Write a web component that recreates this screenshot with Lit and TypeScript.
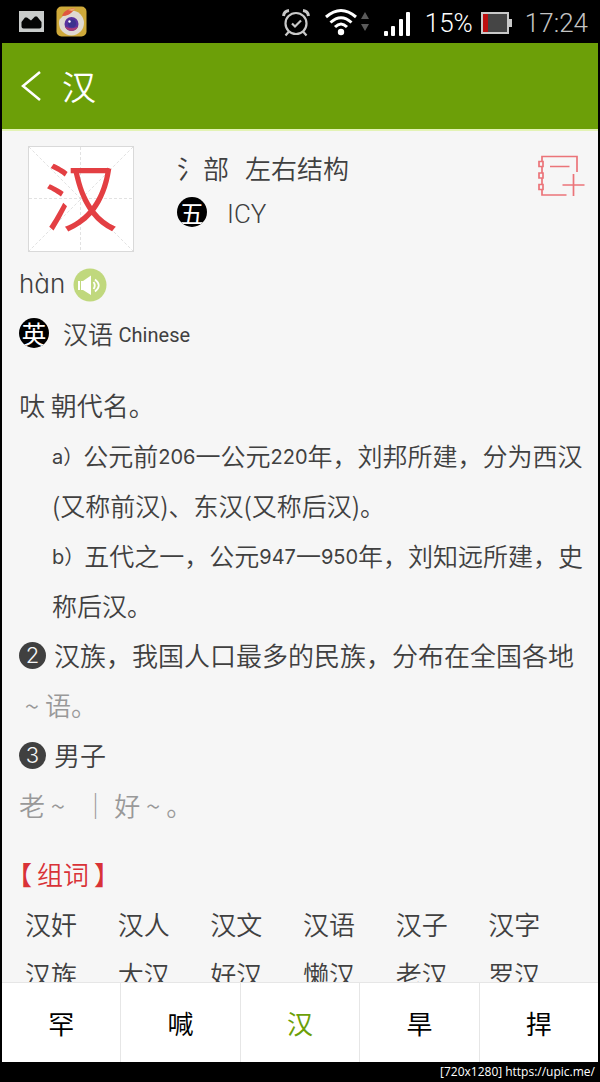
import { LitElement, html, css } from "lit";
import { customElement, property } from "lit/decorators.js";

const CJK = css`"Noto Sans CJK SC", sans-serif`;

@customElement("status-bar")
class StatusBar extends LitElement {
  static styles = css`
    :host {
      display: flex;
      align-items: center;
      height: 43px;
      padding: 0 12px 0 19px;
      background: #000;
      color: #fff;
      font: 300 26px/32px Roboto, sans-serif;
    }
    svg { display: block; flex: none; }
    span { padding-top: 3px; }
    .app { margin-left: 12px; }
    .alarm { margin-left: auto; margin-top: 3px; }
    .wifi { margin-left: 15px; }
    .signal { margin-left: 14px; margin-top: 4px; }
    .percent { margin-left: 14px; }
    .battery { margin-left: 8px; margin-top: 2px; }
    .time { margin-left: 12px; color: #c4c4c4; }
  `;
  render() {
    return html`
      <svg width="25" height="21" viewBox="0 0 25 21" role="img" aria-label="picture">
        <rect width="25" height="21" fill="#c9cccb" />
        <path fill="#050606" d="M2.500 11L6 6.500L8 6.500L12 9.500L16 5.500H18L22.500 11V15.500Q22.500 17.500 20.500 17.500H4.500Q2.500 17.500 2.500 15.500z" />
      </svg>
      <svg class="app" width="31" height="31" viewBox="0 0 31 31" role="img" aria-label="camera app">
        <rect x=".5" y=".5" width="30" height="30" rx="5" fill="#cfa93a" />
        <circle cx="15.500" cy="17" r="12.500" fill="#dfd9d2" />
        <path d="M4 3Q12 0 20 2Q17 4 16 6Q12 9 7 10L4 13z" fill="#cfa93a" />
        <path d="M6 10C8 4 14 2 20 2.500C16 4 16 10 6 10" fill="#df563f" />
        <path d="M12 4C15 2.500 18 2.500 20 2.500L16 5z" fill="#ecaa72" />
        <circle cx="15.500" cy="18" r="7" fill="#59329e" />
        <path d="M9 20.500a7 7 0 0 0 13 0Q16 24 9 20.500" fill="#a83c75" />
        <circle cx="16" cy="17.500" r="4" fill="#3b328e" />
        <circle cx="13.500" cy="15.500" r="1.200" fill="#fff" />
      </svg>
      <svg class="alarm" width="28" height="28" viewBox="0 0 28 28" fill="none" stroke="#c9c9c9" stroke-width="2.200" role="img" aria-label="alarm">
        <circle cx="14" cy="14.500" r="10.500" />
        <path d="M7 22.500L3.500 26.500M21 22.500L24.500 26.500M10 14.500l3 3l6-6" />
        <path d="M1.500 7Q2 2 7 1.500M26.500 7Q26 2 21 1.500" stroke-width="3" />
      </svg>
      <svg class="wifi" width="45" height="28" viewBox="0 0 45 28" fill="none" stroke="#fff" stroke-width="3" role="img" aria-label="wifi">
        <path d="M1 9Q16 -4 31 9M5.500 14.500Q16 5 26.500 14.500M10 19Q16 13 22 19" />
        <circle cx="16" cy="24" r="3.200" fill="#fff" stroke="none" />
        <path d="M36 11l4-7l4 7zM36 16h8l-4 7z" fill="#5a5a5a" stroke="none" />
      </svg>
      <svg class="signal" width="27" height="24" viewBox="0 0 27 24" fill="#fff" role="img" aria-label="signal">
        <rect x="0" y="19" width="4" height="5" rx="1" /><rect x="7" y="14" width="4" height="10" rx="1" />
        <rect x="15" y="7" width="4" height="17" rx="1" /><rect x="22" y="0" width="4" height="24" rx="1" />
      </svg>
      <span class="percent">15%</span>
      <svg class="battery" width="32" height="22" viewBox="0 0 32 22" role="img" aria-label="battery">
        <path d="M0 0h28v22H0zM28 7h3v8h-3z" fill="#c9c9c9" />
        <path d="M2 2h24v18H2z" fill="#454545" /><path d="M2 2h5v18H2z" fill="#bd1010" />
      </svg>
      <span class="time">17:24</span>
    `;
  }
}

@customElement("round-badge")
class RoundBadge extends LitElement {
  @property() label = "";
  static styles = css`
    :host {
      display: inline-grid;
      place-items: center;
      flex: none;
      width: 30px;
      height: 30px;
      border-radius: 50%;
      overflow: hidden;
      background: #000;
      color: #fff;
      font: 400 25px/26px ${CJK};
    }
  `;
  render() {
    return html`<span>${this.label}</span>`;
  }
}

@customElement("app-root")
class AppRoot extends LitElement {
  static styles = css`
    :host {
      display: flex;
      flex-direction: column;
      height: 100vh;
      overflow: hidden;
      background: #000;
      color: #404040;
      font: 350 26px/50px ${CJK};
    }
    button { margin: 0; padding: 0; border: 0; background: none; font: inherit; color: inherit; cursor: pointer; }
    svg { display: block; }
    h1, h2, p, ul { margin: 0; padding: 0; font: inherit; list-style: none; }
    .screen { flex: 1; min-height: 0; display: flex; flex-direction: column; margin: 0 2px; background: #f6f6f6; }
    .bar { display: flex; align-items: center; gap: 20px; height: 88px; padding: 0 18px; background: #6c9f08; border-bottom: 2px solid #e3f3b5; color: #fff; box-sizing: border-box; }
    .bar h1 { font-size: 34px; }
    .content { flex: 1; min-height: 0; overflow: hidden; padding: 15px 13px 0 17px; }
    .entry { display: flex; align-items: flex-start; }
    .tile { position: relative; width: 106px; height: 106px; margin-left: 9px; flex: none; }
    .glyph { position: absolute; inset: 0; text-align: center; font-size: 74px; font-weight: 400; line-height: 94px; color: #e33f43; }
    .facts { flex: 1; margin-left: 43px; }
    .facts p { display: flex; align-items: center; height: 44px; line-height: 44px; }
    .radical { gap: 16px; }
    .code { gap: 20px; font-family: Roboto, sans-serif; font-weight: 300; }
    .code span { padding-top: 4px; }
    .pinyin { display: flex; align-items: center; gap: 8px; height: 40px; margin-top: 13px; }
    .pinyin span { font-family: Inter, sans-serif; font-weight: 300; line-height: 36px; padding-bottom: 2px; font-feature-settings: "cv11"; }
    .english { display: flex; align-items: center; gap: 14px; margin-top: 3px; font-size: 25px; }
    .translation, .latin { font: 400 20px/24px Inter, "Noto Sans CJK SC", sans-serif; vertical-align: 2px; }
    .translation { font-family: Roboto, sans-serif; }
    .meaning { margin-top: 22px; }
    .sub { padding-left: 33px; font-size: 25px; }
    .item { display: flex; align-items: center; gap: 8px; }
    .num { display: grid; place-items: center; width: 27px; height: 27px; border-radius: 50%; background: #404040; color: #f6f6f6; font: 300 22px/27px Inter, sans-serif; flex: none; }
    .example { color: #999; white-space: pre-wrap; }
    .words { margin-top: 19px; }
    .words h2 { display: flex; gap: 5px; color: #d93237; font-feature-settings: "halt"; }
    .grid { display: grid; grid-template-columns: repeat(6, 1fr); padding-left: 6px; margin-right: 4px; }
    .tabs { display: flex; height: 80px; background: #fff; border-top: 1px solid #e6e6e6; box-sizing: border-box; }
    .tabs button { flex: 1; color: #000; font-weight: 400; border-left: 1px solid #e6e6e6; }
    .tabs button:first-child { border-left: 0; }
    .tabs .active { color: #6c9f08; }
    .credit { display: flex; justify-content: flex-end; gap: 3px; height: 20px; padding-right: 5px; color: #fff; font: 400 12px/20px "Open Sans", sans-serif; }
  `;

  words = ["汉奸", "汉人", "汉文", "汉语", "汉子", "汉字", "汉族", "大汉", "好汉", "懒汉", "老汉", "罗汉"];
  tabs = ["罕", "喊", "汉", "旱", "捍"];

  render() {
    return html`
      <status-bar></status-bar>
      <div class="screen">
        <header class="bar">
          <button aria-label="Back">
            <svg width="22" height="30" viewBox="0 0 22 30" fill="none" stroke="#fff" stroke-width="2.500"><path d="M20 1L3 15L20 29" /></svg>
          </button>
          <h1>汉</h1>
        </header>
        <main class="content">
          <section class="entry">
            <div class="tile">
              <svg width="106" height="106" viewBox="0 0 106 106" fill="none" stroke="#d9d9d9">
                <rect x=".5" y=".5" width="105" height="105" fill="#fff" />
                <path stroke-dasharray="3 2" stroke="#e2e2e2" d="M52.500 1V105M1 52.500H105M1 1L105 105M105 1L1 105" />
              </svg>
              <span class="glyph">汉</span>
            </div>
            <div class="facts">
              <p class="radical"><span>氵部</span><span>左右结构</span></p>
              <p class="code"><round-badge label="五"></round-badge><span>ICY</span></p>
            </div>
            <button aria-label="Add to notebook">
              <svg width="48" height="56" viewBox="0 0 48 56" fill="none" stroke="#eb7479" stroke-width="1.700">
                <path d="M5 15V10.500H40V26M5 20.500V27M5 32V38.500M5 43.500V49H29.500M13 20.500H32.500M36.500 28V50M25.500 39H47.500" />
                <path d="M2 15.500h4v5H2zM2 27h4v5H2zM2 38.500h4v5H2z" />
              </svg>
            </button>
          </section>
          <div class="pinyin">
            <span>hàn</span>
            <button aria-label="Play pronunciation">
              <svg width="34" height="34" viewBox="0 0 34 34">
                <circle cx="17" cy="17" r="16.500" fill="#c0d87d" />
                <path d="M5 13h2v9H5zM8 13h2l8-5.500V27L10 22H8z" fill="#fff" />
                <path d="M20.500 14Q23 17.500 20.500 21M22 11.500Q29.500 17.500 22 23.500" fill="none" stroke="#fff" stroke-width="1.800" />
              </svg>
            </button>
          </div>
          <p class="english"><round-badge label="英"></round-badge><span>汉语 <span class="translation">Chinese</span></span></p>
          <section class="meaning">
            <p>呔 朝代名。</p>
            <div class="sub">
              <p><span class="latin">a）</span>公元前<span class="latin">206</span>一公元<span class="latin">220</span>年，刘邦所建，分为西汉(又称前汉)、东汉(又称后汉)。</p>
              <p><span class="latin">b）</span>五代之一，公元<span class="latin">947</span>一<span class="latin">950</span>年，刘知远所建，史称后汉。</p>
            </div>
            <p class="item"><span class="num">2</span>汉族，我国人口最多的民族，分布在全国各地</p>
            <p class="example"> ~ 语。</p>
            <p class="item"><span class="num">3</span>男子</p>
            <p class="example">老 ~   ｜ 好 ~ 。</p>
          </section>
          <section class="words">
            <h2><span>【</span><span>组词</span><span>】</span></h2>
            <ul class="grid">${this.words.map((w) => html`<li>${w}</li>`)}</ul>
          </section>
        </main>
        <nav class="tabs">
          ${this.tabs.map((t) => html`<button class=${t === "汉" ? "active" : ""}>${t}</button>`)}
        </nav>
      </div>
      <footer class="credit"><span>[720x1280]</span><span>https://upic.me/</span></footer>
    `;
  }
}
